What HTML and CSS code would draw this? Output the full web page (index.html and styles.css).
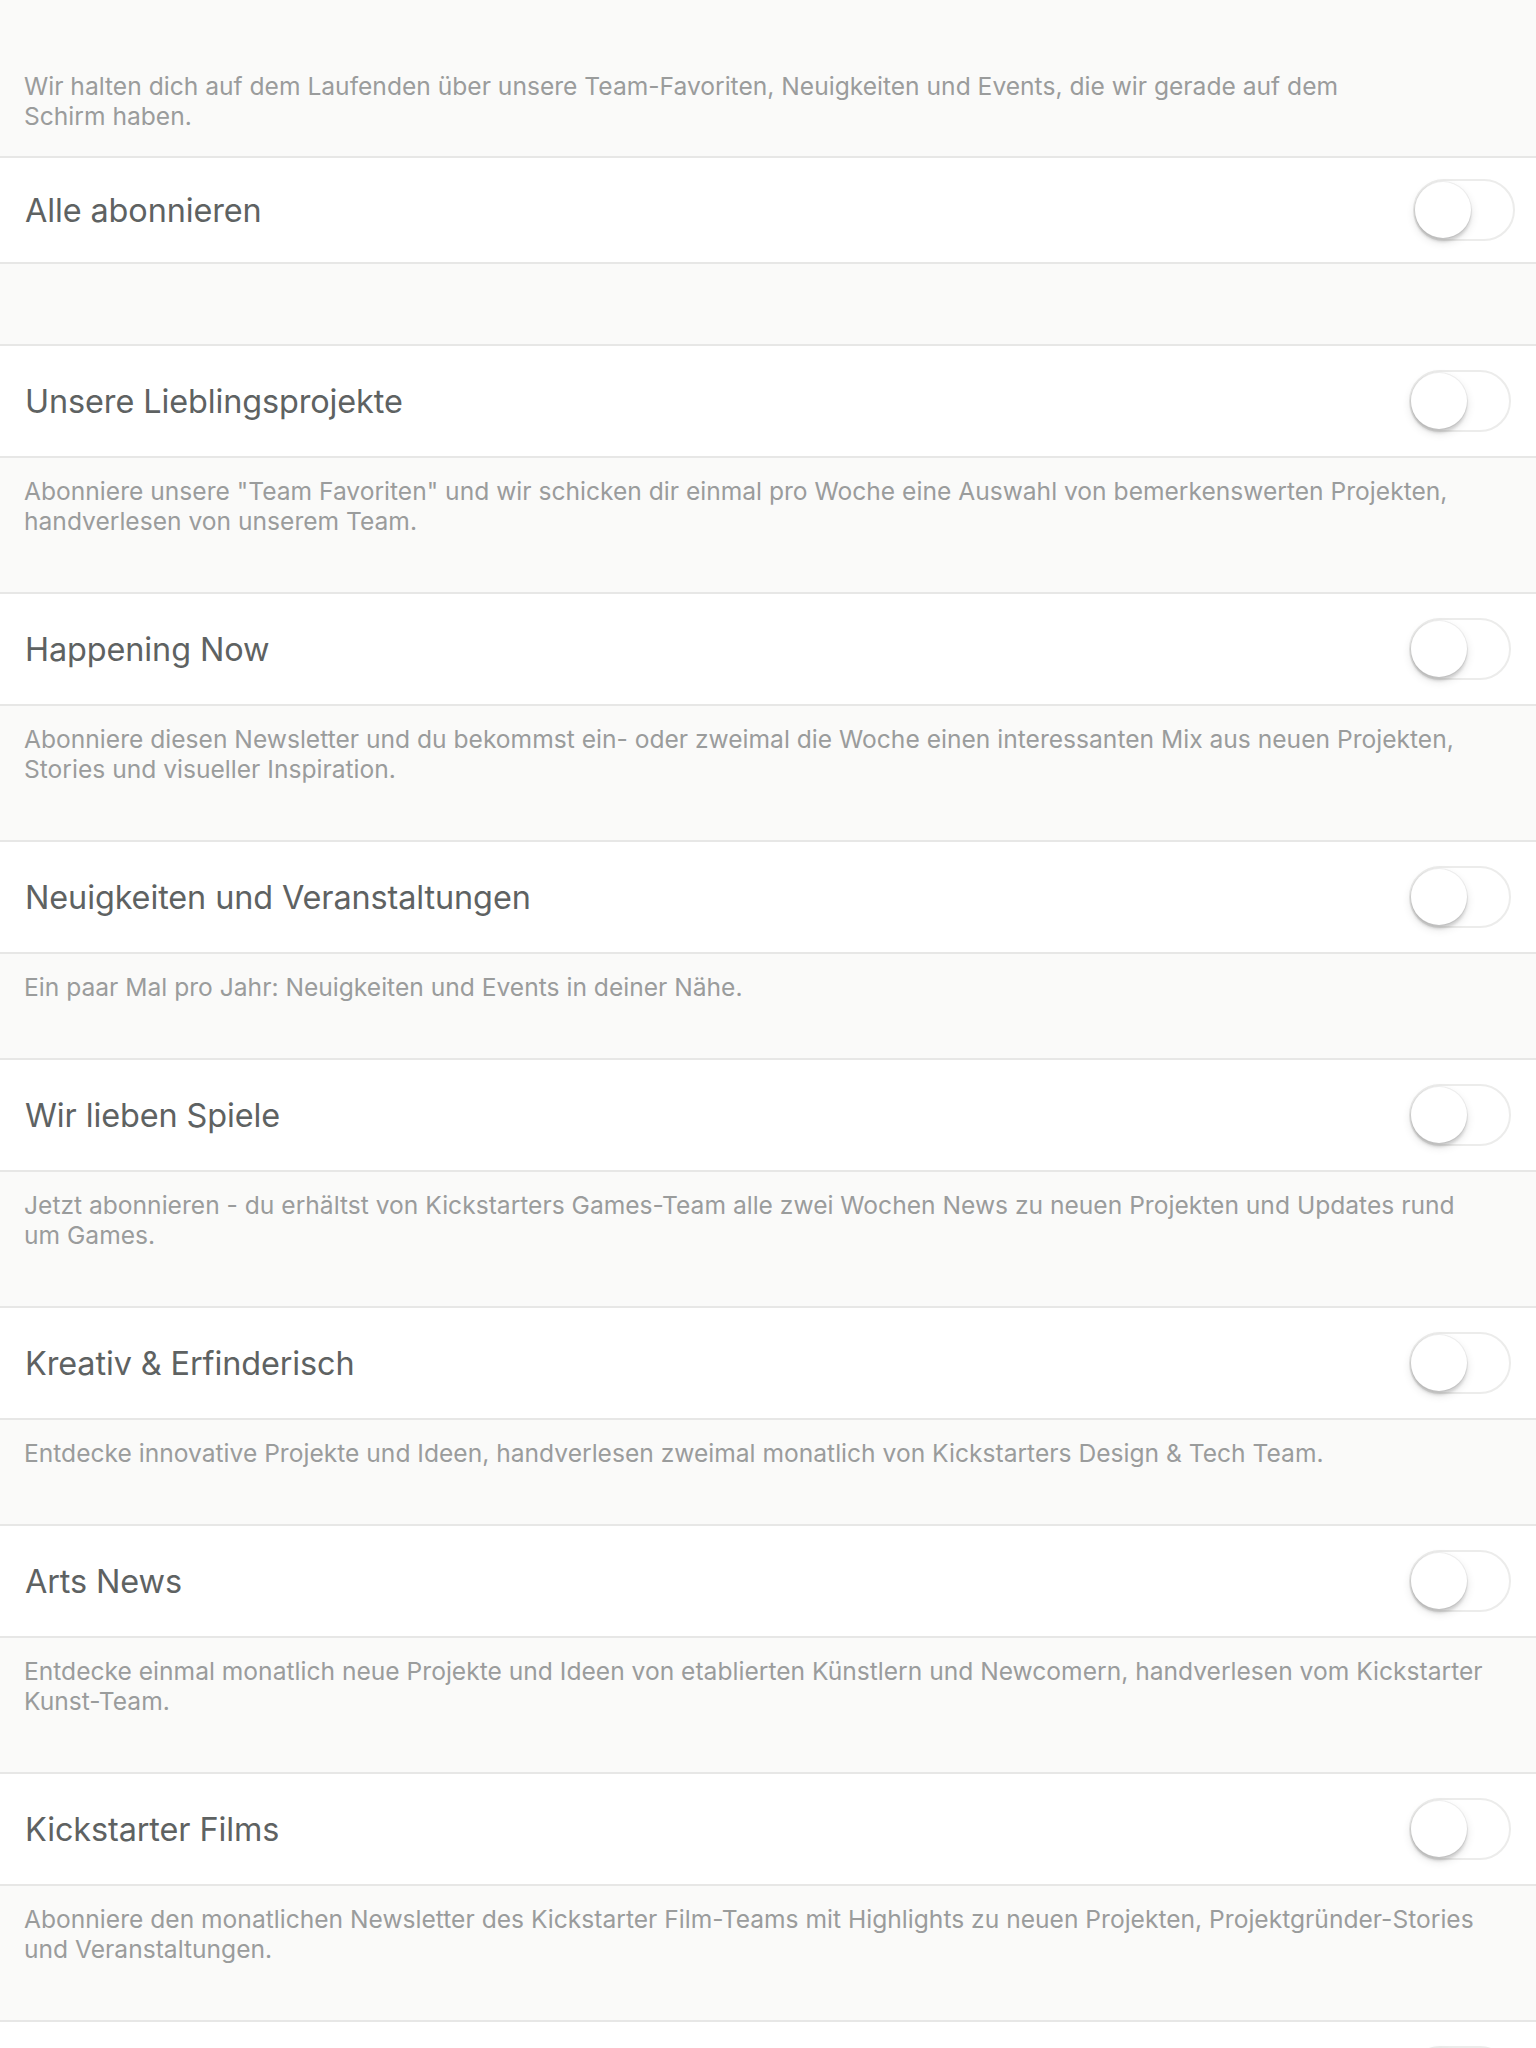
FILE: index.html
```html
<!DOCTYPE html>
<html lang="de">
<head>
<meta charset="utf-8">
<title>Newsletter</title>
<link rel="stylesheet" href="styles.css">
</head>
<body>
<main class="list">
  <section class="intro">
    <p class="desc">Wir halten dich auf dem Laufenden über unsere Team-Favoriten, Neuigkeiten und Events, die wir gerade auf dem<br>Schirm haben.</p>
  </section>

  <div class="row row-all">
    <span class="title">Alle abonnieren</span>
    <span class="switch"><span class="knob"></span></span>
  </div>

  <div class="gap"></div>

  <div class="row">
    <span class="title">Unsere Lieblingsprojekte</span>
    <span class="switch"><span class="knob"></span></span>
  </div>
  <div class="info">
    <p class="desc">Abonniere unsere "Team Favoriten" und wir schicken dir einmal pro Woche eine Auswahl von bemerkenswerten Projekten,<br>handverlesen von unserem Team.</p>
  </div>

  <div class="row">
    <span class="title">Happening Now</span>
    <span class="switch"><span class="knob"></span></span>
  </div>
  <div class="info">
    <p class="desc">Abonniere diesen Newsletter und du bekommst ein- oder zweimal die Woche einen interessanten Mix aus neuen Projekten,<br>Stories und visueller Inspiration.</p>
  </div>

  <div class="row">
    <span class="title">Neuigkeiten und Veranstaltungen</span>
    <span class="switch"><span class="knob"></span></span>
  </div>
  <div class="info">
    <p class="desc">Ein paar Mal pro Jahr: Neuigkeiten und Events in deiner Nähe.</p>
  </div>

  <div class="row">
    <span class="title">Wir lieben Spiele</span>
    <span class="switch"><span class="knob"></span></span>
  </div>
  <div class="info">
    <p class="desc">Jetzt abonnieren - du erhältst von Kickstarters Games-Team alle zwei Wochen News zu neuen Projekten und Updates rund<br>um Games.</p>
  </div>

  <div class="row">
    <span class="title">Kreativ &amp; Erfinderisch</span>
    <span class="switch"><span class="knob"></span></span>
  </div>
  <div class="info">
    <p class="desc">Entdecke innovative Projekte und Ideen, handverlesen zweimal monatlich von Kickstarters Design &amp; Tech Team.</p>
  </div>

  <div class="row">
    <span class="title">Arts News</span>
    <span class="switch"><span class="knob"></span></span>
  </div>
  <div class="info">
    <p class="desc">Entdecke einmal monatlich neue Projekte und Ideen von etablierten Künstlern und Newcomern, handverlesen vom Kickstarter<br>Kunst-Team.</p>
  </div>

  <div class="row">
    <span class="title">Kickstarter Films</span>
    <span class="switch"><span class="knob"></span></span>
  </div>
  <div class="info">
    <p class="desc">Abonniere den monatlichen Newsletter des Kickstarter Film-Teams mit Highlights zu neuen Projekten, Projektgründer-Stories<br>und Veranstaltungen.</p>
  </div>

  <div class="row">
    <span class="title"></span>
    <span class="switch"><span class="knob"></span></span>
  </div>
</main>
</body>
</html>
```

FILE: styles.css
```css
html, body {
  margin: 0;
  padding: 0;
  background: #fafaf9;
}

body {
  font-family: Inter, "Noto Sans", sans-serif;
  -webkit-font-smoothing: antialiased;
}

.list {
  display: flex;
  flex-direction: column;
  width: 1536px;
  height: 2048px;
  overflow: hidden;
}

.desc {
  margin: 0;
  font-size: 24.6px;
  line-height: 30px;
  color: #9a9c9c;
  white-space: nowrap;
}

.intro {
  flex: none;
  padding: 71px 24px 25px;
  border-bottom: 2px solid #e7e7e6;
}

.row {
  flex: none;
  display: flex;
  align-items: center;
  justify-content: space-between;
  height: 110px;
  padding: 0 25px;
  background: #ffffff;
  border-bottom: 2px solid #e7e7e6;
}

.row-all {
  height: 104px;
  padding-right: 21px;
}

.gap {
  flex: none;
  height: 80px;
  border-bottom: 2px solid #e7e7e6;
}

.title {
  font-size: 32.4px;
  color: #5e6262;
  letter-spacing: -0.1px;
}

.info {
  flex: none;
  padding: 18px 24px 56px;
  border-bottom: 2px solid #e7e7e6;
}

.switch {
  position: relative;
  flex: none;
  width: 102px;
  height: 62px;
  box-sizing: border-box;
  border: 2px solid #ececeb;
  border-radius: 31px;
  background: #ffffff;
}

.knob {
  position: absolute;
  top: 1px;
  left: 0;
  width: 56px;
  height: 56px;
  border-radius: 50%;
  background: #ffffff;
  box-shadow: 0 0 0 1px rgba(0, 0, 0, 0.05), 0 4px 3px rgba(0, 0, 0, 0.12), 0 4px 10px rgba(0, 0, 0, 0.12);
}
```
